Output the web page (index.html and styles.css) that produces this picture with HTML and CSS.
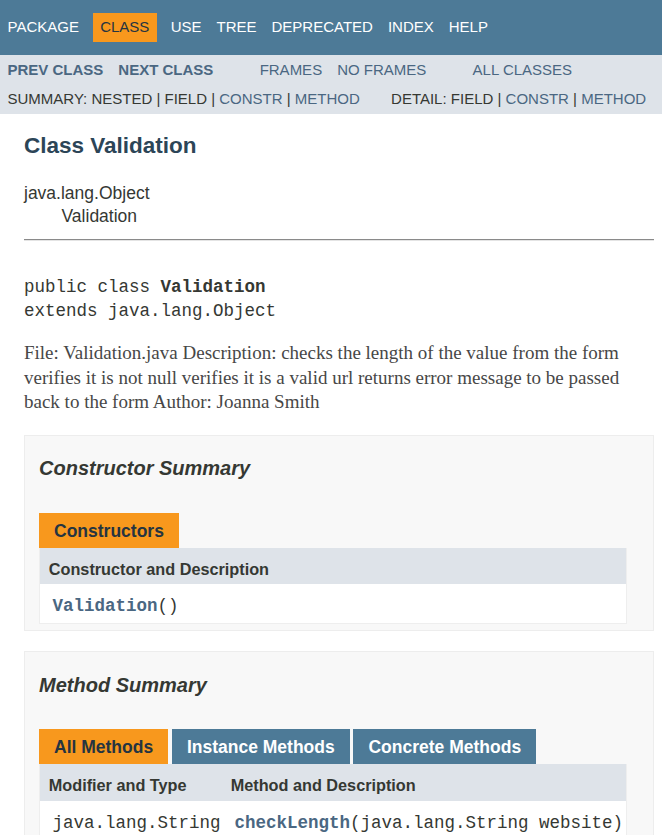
FILE: index.html
```html
<!DOCTYPE html>
<html lang="en">
<head>
<meta charset="utf-8">
<title>Validation</title>
<link rel="stylesheet" href="styles.css">
</head>
<body>
<div class="top-nav">
  <ul class="nav-list">
    <li><a href="#">Package</a></li>
    <li class="nav-current">Class</li>
    <li><a href="#">Use</a></li>
    <li><a href="#">Tree</a></li>
    <li><a href="#">Deprecated</a></li>
    <li><a href="#">Index</a></li>
    <li><a href="#">Help</a></li>
  </ul>
</div>
<div class="sub-nav">
  <div class="sub-nav-row">
    <ul class="nav-list">
      <li><a href="#" class="strong">Prev Class</a></li>
      <li><a href="#" class="strong">Next Class</a></li>
    </ul>
    <ul class="nav-list">
      <li><a href="#">Frames</a></li>
      <li><a href="#">No Frames</a></li>
    </ul>
    <ul class="nav-list">
      <li><a href="#">All Classes</a></li>
    </ul>
  </div>
  <div class="sub-nav-links">
    <ul class="sub-nav-list">
      <li>Summary: </li>
      <li>Nested | </li>
      <li>Field | </li>
      <li><a href="#">Constr</a> | </li>
      <li><a href="#">Method</a></li>
    </ul>
    <ul class="sub-nav-list">
      <li>Detail: </li>
      <li>Field | </li>
      <li><a href="#">Constr</a> | </li>
      <li><a href="#">Method</a></li>
    </ul>
  </div>
</div>

<div class="header">
  <h2 class="title">Class Validation</h2>
</div>

<div class="content">
  <div class="inheritance">
    <div>java.lang.Object</div>
    <div class="inheritance-child">Validation</div>
  </div>
  <hr class="divider">
  <pre class="signature">public class <b>Validation</b>
extends java.lang.Object</pre>
  <div class="description">File: Validation.java Description: checks the length of the value from the form verifies it is not null verifies it is a valid url returns error message to be passed back to the form Author: Joanna Smith</div>

  <section class="member-box">
    <h3>Constructor Summary</h3>
    <div class="tabs">
      <span class="tab">Constructors</span>
    </div>
    <table class="member-table">
      <tr>
        <th>Constructor and Description</th>
      </tr>
      <tr>
        <td><code><a href="#" class="member-link">Validation</a>()</code></td>
      </tr>
    </table>
  </section>

  <section class="member-box">
    <h3>Method Summary</h3>
    <div class="tabs">
      <span class="tab">All Methods</span>
      <span class="tab tab-inactive">Instance Methods</span>
      <span class="tab tab-inactive">Concrete Methods</span>
    </div>
    <table class="member-table">
      <tr>
        <th class="col-first">Modifier and Type</th>
        <th>Method and Description</th>
      </tr>
      <tr>
        <td class="col-first"><code>java.lang.String</code></td>
        <td><code><a href="#" class="member-link">checkLength</a>(java.lang.String&nbsp;website)</code></td>
      </tr>
    </table>
  </section>
</div>
</body>
</html>
```
FILE: styles.css
```css
html, body {
  margin: 0;
  padding: 0;
}

body {
  background: #ffffff;
  color: #353833;
  font-family: "Liberation Sans", Arial, Helvetica, sans-serif;
  font-size: 17.5px;
}

a {
  text-decoration: none;
  color: #4A6782;
}

.strong {
  font-weight: bold;
}

/* top navigation */
.top-nav {
  background: #4D7A97;
  color: #ffffff;
  height: 42px;
  padding-top: 12.5px;
  font-size: 15px;
  overflow: hidden;
}

.nav-list {
  display: flex;
  margin: 0;
  padding: 0;
  list-style: none;
}

.nav-list li {
  padding: 6.25px 7.5px;
  text-transform: uppercase;
}

.top-nav .nav-list li {
  padding-top: 5.5px;
  padding-bottom: 7px;
}

.top-nav a {
  color: #ffffff;
}

.top-nav .nav-current {
  background: #F8981D;
  color: #253441;
  margin: 0 6.25px;
}

/* sub navigation */
.sub-nav {
  background: #dee3e9;
  font-size: 15px;
}

.sub-nav-row {
  display: flex;
}

.sub-nav .nav-list {
  margin-right: 31.25px;
}

.sub-nav-links {
  display: flex;
  padding: 6.25px 0 6.25px 7.5px;
  text-transform: uppercase;
}

.sub-nav-list {
  display: flex;
  margin: 0 31.25px 0 0;
  padding: 0;
  list-style: none;
  white-space: pre;
}

/* header */
.header {
  margin: 0 8px 0 24px;
  padding-top: 6.25px;
}

.title {
  font-size: 22.5px;
  font-weight: bold;
  color: #2c4557;
  margin: 13px 0 12px;
}

/* content */
.content {
  padding: 12.5px 8px 12.5px 24px;
}

.inheritance-child {
  padding: 1.25px 0 0 37.5px;
}

.divider {
  height: 0;
  margin: 12.5px 0 0;
  border: 0;
  border-top: 1px solid #8a8a8a;
  border-bottom: 1px solid #e4e4e4;
}

.signature {
  font-family: "Liberation Mono", "Courier New", monospace;
  font-size: 17.5px;
  line-height: 24.5px;
  margin: 33.5px 0 17.5px;
}

.description {
  font-family: "Liberation Serif", Georgia, "Times New Roman", serif;
  font-size: 19px;
  line-height: 24.5px;
  color: #474747;
  margin: 0 12.5px 0 0;
}

.member-box {
  border: 1px solid #ededed;
  background: #f8f8f8;
  padding: 0 26px 6.25px 14px;
  margin-top: 20px;
  line-height: 1.4;
}

.member-box h3 {
  font-size: 20px;
  font-style: italic;
  font-weight: bold;
  line-height: 28px;
  margin: 18.75px 0 18px;
}

.tabs {
  display: flex;
  gap: 3.75px;
  padding-top: 12.5px;
  font-weight: bold;
  color: #253441;
}

.tab {
  height: 20px;
  padding: 6.25px 15px 8.75px;
  line-height: 24.5px;
  background: #F8981D;
  white-space: nowrap;
}

.tab-inactive {
  background: #4D7A97;
  color: #ffffff;
}

.member-table {
  width: 100%;
  border-collapse: separate;
  border-spacing: 0;
  border: 1px solid #eeeeee;
  border-top: 0;
}

.member-table th {
  background: #dee3e9;
  text-align: left;
  font-size: 16.25px;
  font-weight: bold;
  line-height: 22.75px;
  padding: 10px 3.75px 3.75px 8.75px;
}

.member-table td {
  background: #ffffff;
  font-size: 16.25px;
  line-height: 22.75px;
  padding: 10px 0 3.75px 12.5px;
  vertical-align: top;
}

.col-first {
  white-space: nowrap;
}

code {
  font-family: "Liberation Mono", "Courier New", monospace;
  font-size: 17.5px;
  line-height: 24.5px;
}

.member-link {
  font-weight: bold;
}
```
